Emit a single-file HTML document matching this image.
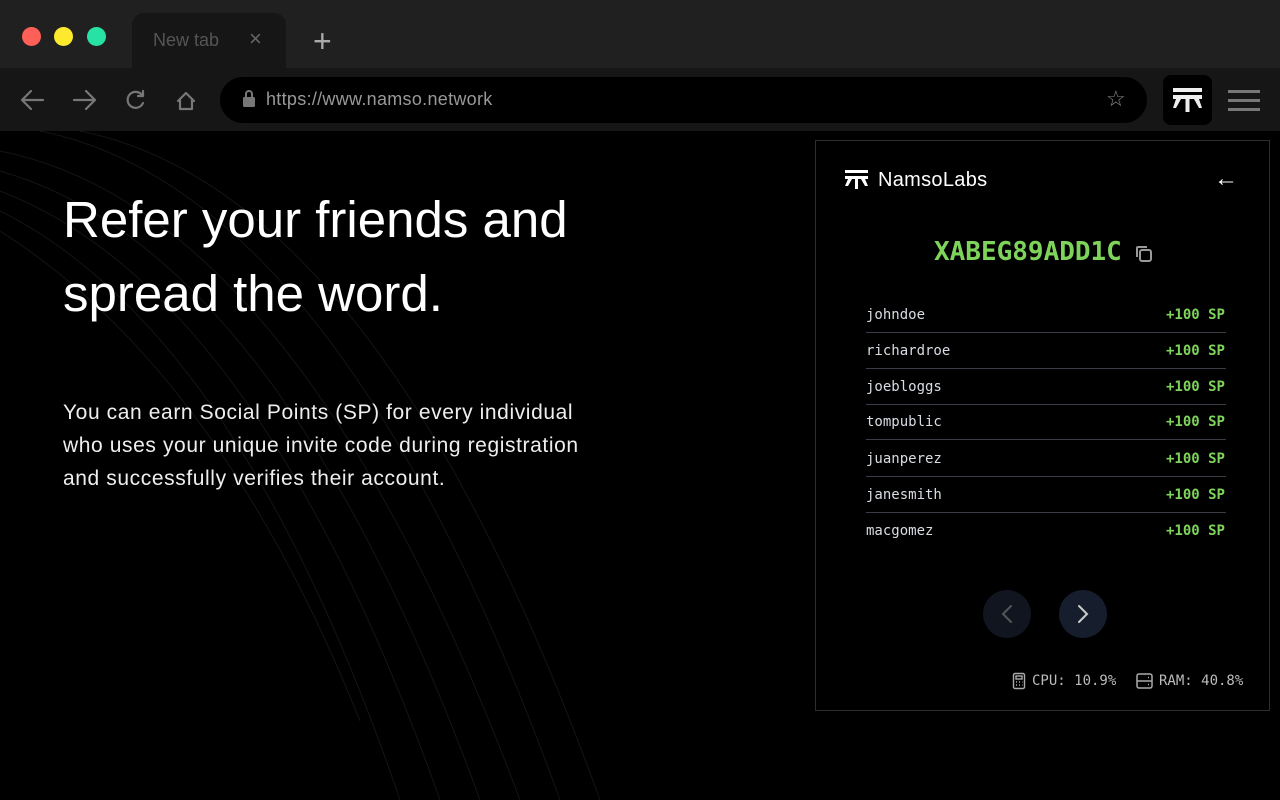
<!DOCTYPE html>
<html><head><style>
*{margin:0;padding:0;box-sizing:border-box}
body{width:1280px;height:800px;background:#000;overflow:hidden;position:relative;font-family:"Liberation Sans",sans-serif}
.top{position:absolute;left:0;top:0;width:1280px;height:68px;background:#202020}
.tab{position:absolute;left:132px;top:13px;width:154px;height:56px;background:#161616;border-radius:12px 12px 0 0}
.bar{position:absolute;left:0;top:68px;width:1280px;height:63px;background:#161616}
.dot{position:absolute;top:27px;width:19px;height:19px;border-radius:50%}
.url{position:absolute;left:220px;top:77px;width:927px;height:46px;background:#000;border-radius:23px}
.mono{font-family:"DejaVu Sans Mono","Liberation Mono",monospace}
.panel{position:absolute;left:815px;top:140px;width:455px;height:571px;border:1px solid #2e2e2e;background:#000}
.row{position:absolute;left:50px;width:360px;height:36px;border-bottom:1px solid #3a3d45;font-size:14px}
.row .n{position:absolute;left:0;top:10px;color:#d8dce3}
.row .p{position:absolute;right:1px;top:10px;color:#7ed35a;font-weight:bold}
.row:last-child{border-bottom:none}
</style></head><body>
<svg style="position:absolute;left:0;top:131px" width="800" height="669">
<g stroke="#141414" fill="none" stroke-width="1">
<path d="M0 20 Q300 80 520 669"/><path d="M0 40 Q280 120 480 669"/><path d="M0 60 Q260 160 440 669"/><path d="M0 80 Q240 200 400 669"/><path d="M0 100 Q220 240 360 590"/><path d="M40 0 Q340 60 560 669"/><path d="M80 0 Q380 60 600 669"/>
</g></svg>
<div class="top"></div>
<div class="tab"></div>
<div class="dot" style="left:22px;background:#fe5f57"></div>
<div class="dot" style="left:54px;background:#fde92d"></div>
<div class="dot" style="left:87px;background:#27e2a4"></div>
<div style="position:absolute;left:153px;top:30px;color:#555;font-size:18px">New tab</div>
<div style="position:absolute;left:249px;top:26px;color:#666;font-size:22px">×</div>
<div style="position:absolute;left:313px;top:23px;color:#aaa;font-size:32px;font-weight:300">+</div>
<div class="bar"></div>
<svg style="position:absolute;left:18px;top:86px" width="190" height="30" fill="none" stroke="#777" stroke-width="2.2" stroke-linecap="round" stroke-linejoin="round">
<path d="M25 14H5M13 5L4 14L13 23"/><path d="M56 14H76M68 5L77 14L68 23"/><path d="M124 9A8 8 0 1 0 125 17M125 5V10H120"/><path d="M160 15L168 7L176 15M162 13V23H174V13"/>
</svg>
<div class="url"></div>
<svg style="position:absolute;left:241px;top:89px" width="16" height="20"><rect x="2" y="8" width="12" height="10" rx="1.5" fill="#777"/><path d="M5 8V5A3 3 0 0 1 11 5V8" stroke="#777" stroke-width="2" fill="none"/></svg>
<div style="position:absolute;left:266px;top:89px;color:#999;font-size:18px;letter-spacing:0.3px">https://www.namso.network</div>
<div style="position:absolute;left:1106px;top:86px;color:#888;font-size:22px">☆</div>
<div style="position:absolute;left:1163px;top:75px;width:49px;height:50px;background:#000;border-radius:8px"></div>
<svg style="position:absolute;left:1172px;top:88px" width="32" height="26" fill="#eee"><rect x="1" y="0" width="29" height="4"/><rect x="1" y="7" width="29" height="4"/><path d="M13.5 11h4v13h-4z"/><path d="M4 11h5l-5 9h-3zM27 11h-5l5 9h3z"/></svg>
<div style="position:absolute;left:1228px;top:90px;width:32px;height:3px;background:#777;box-shadow:0 9px 0 #777,0 18px 0 #777"></div>
<div style="position:absolute;left:63px;top:183px;color:#fff;font-size:51px;line-height:74px;letter-spacing:0px">Refer your friends and<br>spread the word.</div>
<div style="position:absolute;left:63px;top:396px;color:#eee;font-size:21px;line-height:33px;letter-spacing:0.6px">You can earn Social Points (SP) for every individual<br>who uses your unique invite code during registration<br>and successfully verifies their account.</div>
<div class="panel">
<svg style="position:absolute;left:29px;top:29px" width="24" height="20" fill="#fff"><rect x="0" y="0" width="23" height="3"/><rect x="0" y="6" width="23" height="3"/><rect x="10" y="9" width="3" height="10"/><path d="M3 9h4l-4 7h-3zM20 9h-4l4 7h3z"/></svg>
<div style="position:absolute;left:62px;top:28px;color:#fff;font-size:20px;letter-spacing:0.3px">NamsoLabs</div>
<div style="position:absolute;left:398px;top:24px;color:#fff;font-size:24px">←</div>
<div class="mono" style="position:absolute;left:118px;top:96px;color:#7ed35a;font-size:26px;font-weight:bold">XABEG89ADD1C</div>
<svg style="position:absolute;left:318px;top:103px" width="20" height="20" fill="none" stroke="#999" stroke-width="2"><rect x="6" y="6" width="11" height="11" rx="2"/><path d="M3 13V4a1 1 0 0 1 1-1h9"/></svg>
<div class="mono">
<div class="row" style="top:156px"><span class="n">johndoe</span><span class="p">+100 SP</span></div>
<div class="row" style="top:192px"><span class="n">richardroe</span><span class="p">+100 SP</span></div>
<div class="row" style="top:228px"><span class="n">joebloggs</span><span class="p">+100 SP</span></div>
<div class="row" style="top:263px"><span class="n">tompublic</span><span class="p">+100 SP</span></div>
<div class="row" style="top:300px"><span class="n">juanperez</span><span class="p">+100 SP</span></div>
<div class="row" style="top:336px"><span class="n">janesmith</span><span class="p">+100 SP</span></div>
<div class="row" style="top:372px"><span class="n">macgomez</span><span class="p">+100 SP</span></div>
</div>
<div style="position:absolute;left:167px;top:449px;width:48px;height:48px;border-radius:50%;background:#111520"></div>
<div style="position:absolute;left:243px;top:449px;width:48px;height:48px;border-radius:50%;background:#161d2c"></div>
<svg style="position:absolute;left:167px;top:449px" width="124" height="48" fill="none" stroke-width="2" stroke-linecap="round"><path d="M28 16L20 24L28 32" stroke="#555"/><path d="M96 16L104 24L96 32" stroke="#ccc"/></svg>
<svg style="position:absolute;left:196px;top:531px" width="14" height="18" fill="none" stroke="#aaa" stroke-width="1.4"><rect x="1.5" y="1.5" width="11" height="15" rx="1.5"/><rect x="4" y="4" width="6" height="3"/><path d="M4 10h1M7 10h1M10 10h0.5M4 13h1M7 13h1M10 13h0.5"/></svg>
<div class="mono" style="position:absolute;left:216px;top:532px;color:#bbb;font-size:14px">CPU: 10.9%</div>
<svg style="position:absolute;left:320px;top:532px" width="18" height="16" fill="none" stroke="#aaa" stroke-width="1.5"><rect x="1" y="1" width="15" height="14" rx="2"/><path d="M1 8h15M12 4.5h1M12 11.5h1"/></svg>
<div class="mono" style="position:absolute;left:343px;top:532px;color:#bbb;font-size:14px">RAM: 40.8%</div>
</div>
</body></html>
